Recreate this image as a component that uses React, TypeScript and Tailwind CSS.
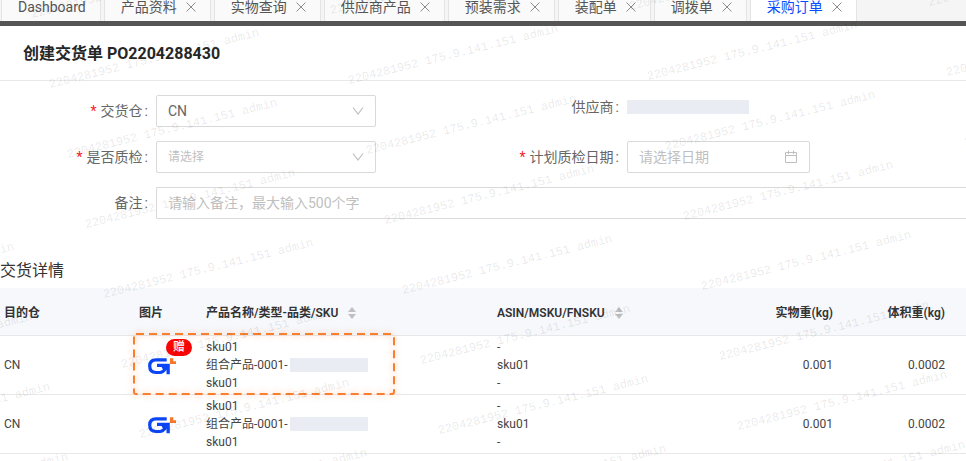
interface TabItem {
  label: string;
  closable: boolean;
  active?: boolean;
}

interface DeliveryRow {
  id: number;
  warehouse: string;
  gift: boolean;
  weight: string;
  volumeWeight: string;
}

const TABS: TabItem[] = [
  { label: "Dashboard", closable: false },
  { label: "产品资料", closable: true },
  { label: "实物查询", closable: true },
  { label: "供应商产品", closable: true },
  { label: "预装需求", closable: true },
  { label: "装配单", closable: true },
  { label: "调拨单", closable: true },
  { label: "采购订单", closable: true, active: true },
];

const ROWS: DeliveryRow[] = [
  { id: 1, warehouse: "CN", gift: true, weight: "0.001", volumeWeight: "0.0002" },
  { id: 2, warehouse: "CN", gift: false, weight: "0.001", volumeWeight: "0.0002" },
];

const WATERMARK_ROWS = [-4, -3, -2, -1, 0, 1, 2, 3];
const WATERMARK_COLS = [-1, 0, 1, 2, 3];

function Watermark() {
  return (
    <svg className="pointer-events-none absolute inset-0 h-full w-full" aria-hidden="true">
      {WATERMARK_ROWS.map((r) =>
        WATERMARK_COLS.map((c) => (
          <text
            key={`${r}:${c}`}
            transform={`translate(${104 + 18 * r + 299 * c} ${298 + 70 * r - 4 * c}) rotate(-14)`}
            className="fill-black/10 font-['Liberation_Mono',monospace] text-[12px]"
          >
            2204281952 175.9.141.151 admin
          </text>
        ))
      )}
    </svg>
  );
}

function CloseIcon() {
  return (
    <svg viewBox="0 0 12 12" className="size-3" fill="none" stroke="#8c8c8c" aria-hidden="true">
      <path d="M1.5 1.5l9 9M10.5 1.5l-9 9" />
    </svg>
  );
}

function DownIcon() {
  return (
    <svg
      viewBox="0 0 12 12"
      className="pointer-events-none absolute top-[10px] right-3 size-3"
      fill="none"
      stroke="#bfbfbf"
      strokeWidth="1.2"
      aria-hidden="true"
    >
      <path d="M1 2.5l5 6.500 5-6.500" />
    </svg>
  );
}

function CalendarIcon() {
  return (
    <svg
      viewBox="0 0 14 14"
      className="pointer-events-none absolute top-[9px] right-3 size-[14px]"
      fill="none"
      stroke="#bfbfbf"
      aria-hidden="true"
    >
      <path d="M1.500 2.500h11v10h-11zM1.500 5.500h11M4.500 0.500v3.500M9.500 0.500v3.500" />
    </svg>
  );
}

function Logo() {
  return (
    <svg viewBox="0 0 28 18" className="h-[18px] w-7" role="img" aria-label="logo">
      <path
        d="M18.700 2.800H8C3.500 2.800 1.700 5.500 1.700 9C1.700 12.800 3.800 15.500 8 15.500H12C15.500 15.500 16.500 13 18.500 10.500"
        fill="none"
        stroke="#0b45f5"
        strokeWidth="3.200"
      />
      <path d="M9 6.800H21.800V17.300H18.500V11.800L16 14.200L13.500 10H9Z" fill="#0b45f5" />
      <path d="M22 1.300H25.300V4.200H28V7H22Z" fill="#f5782a" />
    </svg>
  );
}

function SortIcon() {
  return (
    <svg viewBox="0 0 8 12" className="h-3 w-2" fill="#bfbfbf" aria-hidden="true">
      <path d="M4 0l4 5H0zM4 12l4-5H0z" />
    </svg>
  );
}

function FieldLabel({ htmlFor, text, required = false }: { htmlFor: string; text: string; required?: boolean }) {
  return (
    <label htmlFor={htmlFor} className="flex h-8 items-center justify-end gap-1 pr-2">
      {required ? <span className="text-[#f5222d]">*</span> : null}
      <span className="flex gap-[2px]">
        {text}
        <span>:</span>
      </span>
    </label>
  );
}

function TabBar() {
  return (
    <nav className="flex h-[26px] gap-[3px] overflow-hidden border-b-[5px] border-[#555] bg-[#f5f5f5] pl-px">
      {TABS.map((tab) => (
        <div
          key={tab.label}
          className={`flex shrink-0 items-center gap-2 border-x border-[#e4e4e4] pb-[7px] pl-4 ${
            tab.closable ? "pr-[13px]" : "pr-[14px]"
          } ${tab.active ? "bg-white text-[#0b4bff]" : "bg-[#fafafa] text-[#555]"}`}
        >
          <button type="button" className="leading-[14px]">
            {tab.label}
          </button>
          {tab.closable ? (
            <button type="button" aria-label={`关闭${tab.label}`}>
              <CloseIcon />
            </button>
          ) : null}
        </div>
      ))}
    </nav>
  );
}

function DeliveryForm() {
  return (
    <form className="grid grid-cols-[156px_315px_156px_1fr] gap-y-[14px] pt-[14px] text-[#666]">
      <FieldLabel htmlFor="warehouse" text="交货仓" required />
      <div className="relative w-[220px]">
        <select
          id="warehouse"
          className="h-8 w-full appearance-none rounded-xs border border-[#d9d9d9] px-[11px]"
        >
          <option>CN</option>
        </select>
        <DownIcon />
      </div>
      <span className="flex h-6 items-center justify-end gap-[2px] pr-2">
        供应商
        <span>:</span>
      </span>
      <div className="flex h-6 items-center">
        <span className="h-[14px] w-[122px] bg-[#e9edf3]" />
      </div>

      <FieldLabel htmlFor="inspect" text="是否质检" required />
      <div className="relative w-[220px]">
        <select
          id="inspect"
          className="h-8 w-full appearance-none rounded-xs border border-[#d9d9d9] px-[11px] text-xs text-[#bfbfbf]"
        >
          <option>请选择</option>
        </select>
        <DownIcon />
      </div>
      <FieldLabel htmlFor="inspect-date" text="计划质检日期" required />
      <div className="relative w-[183px]">
        <input
          id="inspect-date"
          placeholder="请选择日期"
          className="h-8 w-full rounded-xs border border-[#d9d9d9] px-[11px] placeholder:text-[#bfbfbf]"
        />
        <CalendarIcon />
      </div>

      <FieldLabel htmlFor="remark" text="备注" />
      <input
        id="remark"
        placeholder="请输入备注，最大输入500个字"
        className="col-span-3 h-8 rounded-l-xs border border-r-0 border-[#d9d9d9] px-[11px] placeholder:text-[#bfbfbf]"
      />
    </form>
  );
}

function DeliveryTable() {
  return (
    <table className="w-full table-fixed border-separate border-spacing-0 text-left text-xs leading-[18px] text-[#444]">
      <colgroup>
        <col className="w-[134px]" />
        <col className="w-[67px]" />
        <col className="w-[291px]" />
        <col />
        <col className="w-[112px]" />
        <col className="w-[128px]" />
      </colgroup>
      <thead>
        <tr className="h-12 bg-[#f6f8fc] text-[#333] *:border-b *:border-[#e8e8e8] *:pt-[2px] *:font-semibold">
          <th className="px-1">目的仓</th>
          <th className="px-[5px]">图片</th>
          <th className="px-[5px]">
            <span className="flex items-center gap-[10px]">
              产品名称/类型-品类/SKU
              <SortIcon />
            </span>
          </th>
          <th className="px-[5px]">
            <span className="flex items-center gap-[10px]">
              ASIN/MSKU/FNSKU
              <SortIcon />
            </span>
          </th>
          <th className="px-[5px] text-right">实物重(kg)</th>
          <th className="pr-[21px] text-right">体积重(kg)</th>
        </tr>
      </thead>
      <tbody>
        {ROWS.map((row) => (
          <tr key={row.id} className="h-[59px] *:border-b *:border-[#e8e8e8]">
            <td className="px-1">{row.warehouse}</td>
            <td className="relative pt-[2px] pl-[14px]">
              <Logo />
              {row.gift ? (
                <>
                  <span className="absolute top-[3px] left-8 h-[17px] w-[26px] rounded-full bg-[#fa0505] text-center leading-[17px] font-medium text-white">
                    赠
                  </span>
                  <svg
                    className="pointer-events-none absolute -top-[3px] -left-px h-[62px] w-[262px] overflow-visible drop-shadow-[0_0_3px_#ff7a2e88]"
                    aria-hidden="true"
                  >
                    <rect
                      x="1"
                      y="1"
                      width="260"
                      height="60"
                      rx="2"
                      fill="none"
                      stroke="#f97f2f"
                      strokeWidth="2"
                      strokeDasharray="8 5"
                    />
                  </svg>
                </>
              ) : null}
            </td>
            <td className="px-[5px]">
              <div>sku01</div>
              <div className="flex items-center gap-[2px]">
                组合产品-0001-
                <span className="h-[14px] w-[78px] bg-[#e9edf3]" />
              </div>
              <div>sku01</div>
            </td>
            <td className="px-[5px]">
              <div>-</div>
              <div>sku01</div>
              <div>-</div>
            </td>
            <td className="px-[5px] text-right">{row.weight}</td>
            <td className="pr-[21px] text-right">{row.volumeWeight}</td>
          </tr>
        ))}
      </tbody>
    </table>
  );
}

export default function App() {
  return (
    <div className="relative min-h-screen overflow-hidden bg-white font-[Roboto,'Noto_Sans_CJK_SC',sans-serif] text-sm">
      <TabBar />
      <header className="border-b border-[#e8e8e8] px-[23px] pt-4 pb-[14px]">
        <h1 className="text-base font-bold text-[#262626]">创建交货单 PO2204288430</h1>
      </header>
      <DeliveryForm />
      <section className="pt-10">
        <h2 className="pb-[5px] text-base text-[#333]">交货详情</h2>
        <DeliveryTable />
      </section>
      <Watermark />
    </div>
  );
}
